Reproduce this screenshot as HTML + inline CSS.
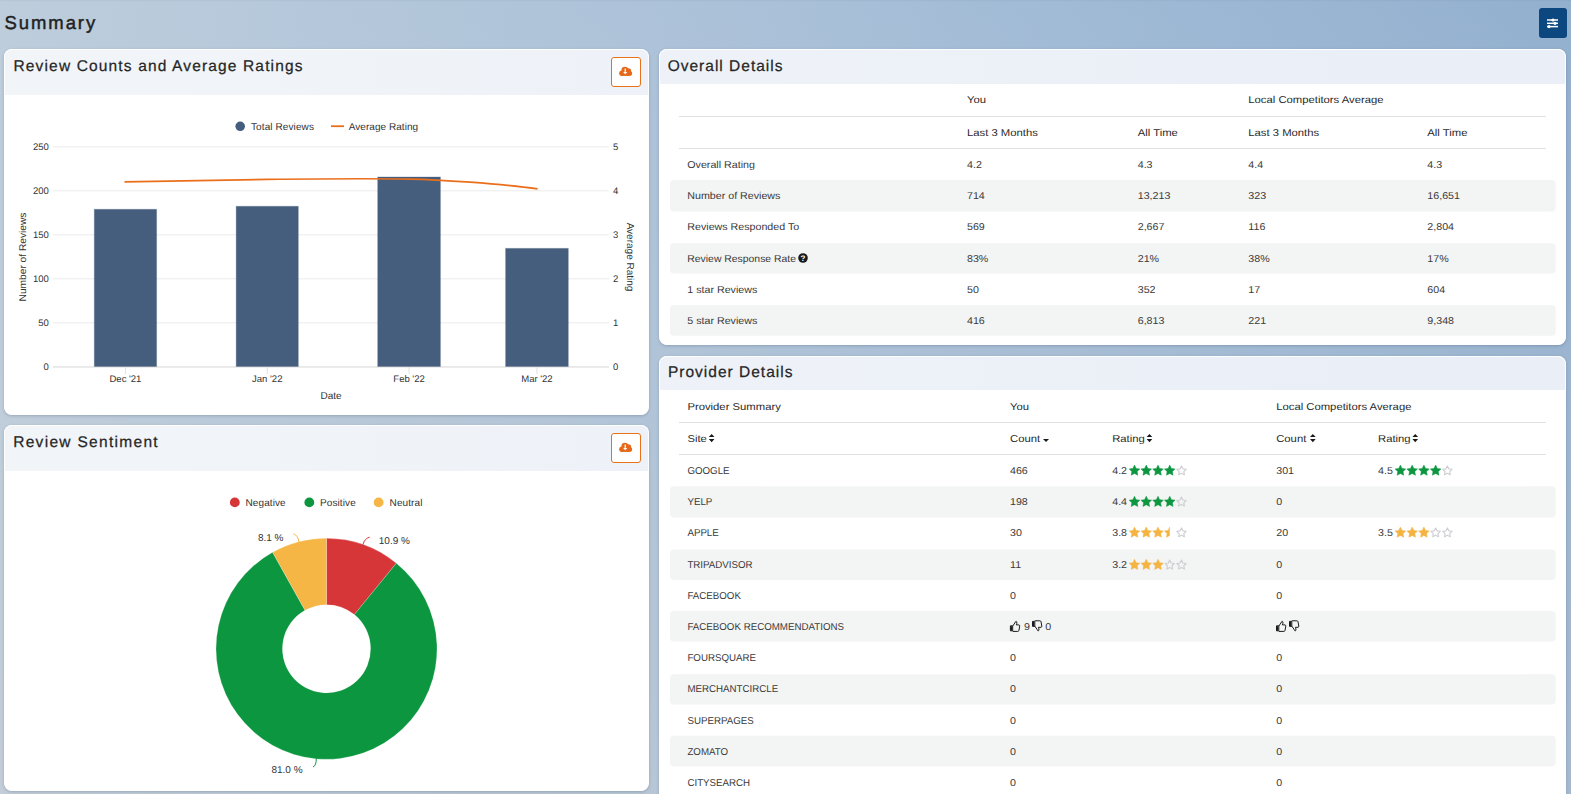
<!DOCTYPE html>
<html><head><meta charset="utf-8"><style>
*{margin:0;padding:0;box-sizing:border-box}
html,body{width:1571px;height:794px;overflow:hidden}
body{font-family:"Liberation Sans", sans-serif;position:relative;
background:linear-gradient(to bottom,rgba(204,205,207,0) 0%,rgba(204,205,207,.12) 40%,rgba(204,205,207,.35) 100%),linear-gradient(to right,#bdcddc 0%,#a9c0d8 50%,#9ab6d3 82%,#93b0cf 100%);}
.card{position:absolute;background:#fff;border-radius:8px;box-shadow:0 1px 3px rgba(40,60,90,.25);overflow:hidden}
.hdr{position:absolute;left:0;top:0;right:0;background:linear-gradient(90deg,#f1f4f8,#e9eef5)}
.card::after{content:'';position:absolute;left:0;top:0;right:0;bottom:0;border:1px solid rgba(255,255,255,.9);border-radius:8px}
svg{position:absolute;left:0;top:0}
.topsh{position:absolute;left:0;top:0;width:100%;height:2px;background:linear-gradient(to bottom,rgba(60,80,100,.07),rgba(60,80,100,0))}
</style></head>
<body>
<div class="topsh"></div>
<div class="card" style="left:4px;top:49px;width:645px;height:366px"><div class="hdr" style="height:46px;background:linear-gradient(90deg,#f2f5f8,#eef2f8)"></div></div>
<div class="card" style="left:4px;top:425px;width:645px;height:366px"><div class="hdr" style="height:46px;background:linear-gradient(90deg,#f2f5f8,#eef2f8)"></div></div>
<div class="card" style="left:659px;top:49px;width:907px;height:296px"><div class="hdr" style="height:35px;background:linear-gradient(90deg,#eef2f8,#e9eef7)"></div></div>
<div class="card" style="left:659px;top:356px;width:907px;height:474px"><div class="hdr" style="height:34px;background:linear-gradient(90deg,#eef2f8,#e9eef7)"></div></div>

<svg width="1571" height="794" viewBox="0 0 1571 794" text-rendering="geometricPrecision" font-family='"Liberation Sans", sans-serif'>
<text x="4.6" y="28.7" font-size="18.5" fill="#222" letter-spacing="1.9" font-weight="normal" text-anchor="start" stroke="#222" stroke-width="0.45">Summary</text>
<rect x="1539" y="8" width="28" height="30" rx="3" fill="#0d477f"/>
<rect x="1547" y="19.25" width="11" height="1.5" fill="#fff"/>
<circle cx="1553" cy="20" r="1.6" fill="#fff"/>
<rect x="1547" y="22.55" width="11" height="1.5" fill="#fff"/>
<circle cx="1555" cy="23.3" r="1.6" fill="#fff"/>
<rect x="1547" y="25.85" width="11" height="1.5" fill="#fff"/>
<circle cx="1549" cy="26.6" r="1.6" fill="#fff"/>
<text x="13.5" y="70.8" font-size="15.5" fill="#262626" letter-spacing="1.15" font-weight="normal" text-anchor="start" stroke="#262626" stroke-width="0.25">Review Counts and Average Ratings</text>
<text x="13.2" y="446.8" font-size="15.5" fill="#262626" letter-spacing="1.3" font-weight="normal" text-anchor="start" stroke="#262626" stroke-width="0.25">Review Sentiment</text>
<text x="667.7" y="71.1" font-size="15.5" fill="#262626" letter-spacing="1.0" font-weight="normal" text-anchor="start" stroke="#262626" stroke-width="0.25">Overall Details</text>
<text x="668" y="377.2" font-size="15.5" fill="#262626" letter-spacing="1.0" font-weight="normal" text-anchor="start" stroke="#262626" stroke-width="0.25">Provider Details</text>
<rect x="611.5" y="57.5" width="29" height="29" rx="2.5" fill="#fff" stroke="#e8711c" stroke-width="1"/><g transform="translate(0,0)" fill="#e4691a"><circle cx="621.9" cy="73.2" r="2.7"/><circle cx="624.9" cy="70.2" r="3.4"/><circle cx="628.5" cy="70.9" r="2.6"/><circle cx="629.5" cy="73.3" r="2.6"/><rect x="621.9" y="72.5" width="7.6" height="3.4"/><path d="M623.1 72.1 H627.3 L625.2 74.3Z M624.6 68.6 h1.2 v3.6 h-1.2z" fill="#fff"/></g>
<rect x="611.5" y="433.5" width="29" height="29" rx="2.5" fill="#fff" stroke="#e8711c" stroke-width="1"/><g transform="translate(0,376)" fill="#e4691a"><circle cx="621.9" cy="73.2" r="2.7"/><circle cx="624.9" cy="70.2" r="3.4"/><circle cx="628.5" cy="70.9" r="2.6"/><circle cx="629.5" cy="73.3" r="2.6"/><rect x="621.9" y="72.5" width="7.6" height="3.4"/><path d="M623.1 72.1 H627.3 L625.2 74.3Z M624.6 68.6 h1.2 v3.6 h-1.2z" fill="#fff"/></g>
<line x1="53" y1="366.8" x2="609" y2="366.8" stroke="#ebebeb" stroke-width="1"/>
<text x="48.8" y="370.2" font-size="9.5" fill="#333" letter-spacing="0" font-weight="normal" text-anchor="end" >0</text>
<text x="613" y="370.2" font-size="9.5" fill="#333" letter-spacing="0" font-weight="normal" text-anchor="start" >0</text>
<line x1="53" y1="322.8" x2="609" y2="322.8" stroke="#ebebeb" stroke-width="1"/>
<text x="48.8" y="326.2" font-size="9.5" fill="#333" letter-spacing="0" font-weight="normal" text-anchor="end" >50</text>
<text x="613" y="326.2" font-size="9.5" fill="#333" letter-spacing="0" font-weight="normal" text-anchor="start" >1</text>
<line x1="53" y1="278.8" x2="609" y2="278.8" stroke="#ebebeb" stroke-width="1"/>
<text x="48.8" y="282.2" font-size="9.5" fill="#333" letter-spacing="0" font-weight="normal" text-anchor="end" >100</text>
<text x="613" y="282.2" font-size="9.5" fill="#333" letter-spacing="0" font-weight="normal" text-anchor="start" >2</text>
<line x1="53" y1="234.8" x2="609" y2="234.8" stroke="#ebebeb" stroke-width="1"/>
<text x="48.8" y="238.20000000000002" font-size="9.5" fill="#333" letter-spacing="0" font-weight="normal" text-anchor="end" >150</text>
<text x="613" y="238.20000000000002" font-size="9.5" fill="#333" letter-spacing="0" font-weight="normal" text-anchor="start" >3</text>
<line x1="53" y1="190.8" x2="609" y2="190.8" stroke="#ebebeb" stroke-width="1"/>
<text x="48.8" y="194.20000000000002" font-size="9.5" fill="#333" letter-spacing="0" font-weight="normal" text-anchor="end" >200</text>
<text x="613" y="194.20000000000002" font-size="9.5" fill="#333" letter-spacing="0" font-weight="normal" text-anchor="start" >4</text>
<line x1="53" y1="146.8" x2="609" y2="146.8" stroke="#ebebeb" stroke-width="1"/>
<text x="48.8" y="150.20000000000002" font-size="9.5" fill="#333" letter-spacing="0" font-weight="normal" text-anchor="end" >250</text>
<text x="613" y="150.20000000000002" font-size="9.5" fill="#333" letter-spacing="0" font-weight="normal" text-anchor="start" >5</text>
<line x1="53" y1="367" x2="609" y2="367" stroke="#e0e0e0" stroke-width="1"/>
<rect x="94.3" y="209.3" width="62.3" height="157.2" fill="#465e7d" stroke="rgba(70,94,125,0.3)" stroke-width="1"/>
<line x1="125.44999999999999" y1="367" x2="125.44999999999999" y2="374" stroke="#e0e0e0" stroke-width="1"/>
<text x="125.44999999999999" y="382" font-size="9.5" fill="#333" letter-spacing="0" font-weight="normal" text-anchor="middle" >Dec '21</text>
<rect x="236.2" y="206.3" width="62.10000000000002" height="160.2" fill="#465e7d" stroke="rgba(70,94,125,0.3)" stroke-width="1"/>
<line x1="267.25" y1="367" x2="267.25" y2="374" stroke="#e0e0e0" stroke-width="1"/>
<text x="267.25" y="382" font-size="9.5" fill="#333" letter-spacing="0" font-weight="normal" text-anchor="middle" >Jan '22</text>
<rect x="377.7" y="177.0" width="62.69999999999999" height="189.5" fill="#465e7d" stroke="rgba(70,94,125,0.3)" stroke-width="1"/>
<line x1="409.04999999999995" y1="367" x2="409.04999999999995" y2="374" stroke="#e0e0e0" stroke-width="1"/>
<text x="409.04999999999995" y="382" font-size="9.5" fill="#333" letter-spacing="0" font-weight="normal" text-anchor="middle" >Feb '22</text>
<rect x="505.6" y="248.4" width="62.69999999999993" height="118.1" fill="#465e7d" stroke="rgba(70,94,125,0.3)" stroke-width="1"/>
<line x1="536.95" y1="367" x2="536.95" y2="374" stroke="#e0e0e0" stroke-width="1"/>
<text x="536.95" y="382" font-size="9.5" fill="#333" letter-spacing="0" font-weight="normal" text-anchor="middle" >Mar '22</text>
<text x="331" y="398.5" font-size="10" fill="#333" letter-spacing="0" font-weight="normal" text-anchor="middle" >Date</text>
<text transform="translate(25.5,257) rotate(-90) scale(1.04,1)" font-size="9.8" fill="#333" text-anchor="middle">Number of Reviews</text>
<text transform="translate(627.2,257) rotate(90)" font-size="10" fill="#333" text-anchor="middle">Average Rating</text>
<path d="M124.5 181.9 C 190 180.5, 250 179.6, 267 179.4 S 380 178.6, 409 179.1 S 500 183.5, 537.6 188.9" fill="none" stroke="#ea6f1c" stroke-width="1.6"/>
<circle cx="240.2" cy="126.3" r="4.8" fill="#465e7d"/>
<text x="251" y="129.8" font-size="10" fill="#333" letter-spacing="0.1" font-weight="normal" text-anchor="start" >Total Reviews</text>
<rect x="331" y="125.3" width="13" height="1.8" fill="#ea6f1c"/>
<text x="348.7" y="129.8" font-size="10" fill="#333" letter-spacing="0.05" font-weight="normal" text-anchor="start" >Average Rating</text>
<path d="M326.50 538.30 A110.5 110.5 0 0 1 396.34 563.17 L354.37 614.62 A44.1 44.1 0 0 0 326.50 604.70Z" fill="#d63638" stroke="#fff" stroke-width="0.2"/>
<path d="M396.34 563.17 A110.5 110.5 0 1 1 272.59 552.34 L304.99 610.30 A44.1 44.1 0 1 0 354.37 614.62Z" fill="#0c963f" stroke="#fff" stroke-width="0.2"/>
<path d="M272.59 552.34 A110.5 110.5 0 0 1 326.50 538.30 L326.50 604.70 A44.1 44.1 0 0 0 304.99 610.30Z" fill="#f5b646" stroke="#fff" stroke-width="0.2"/>
<path d="M363 544.6 Q364.5 538.5 369.7 537.1" fill="none" stroke="#d63638" stroke-width="1"/>
<path d="M299 542 Q298 535.5 293.5 533.8" fill="none" stroke="#f4b445" stroke-width="1"/>
<path d="M316.2 758.4 Q316.5 765.5 313 767" fill="none" stroke="#0c963f" stroke-width="1"/>
<text x="378.8" y="543.9" font-size="10" fill="#333" letter-spacing="0" font-weight="normal" text-anchor="start" >10.9 %</text>
<text x="257.9" y="541.1" font-size="10" fill="#333" letter-spacing="0" font-weight="normal" text-anchor="start" >8.1 %</text>
<text x="271.4" y="773" font-size="10" fill="#333" letter-spacing="0" font-weight="normal" text-anchor="start" >81.0 %</text>
<circle cx="234.8" cy="502.4" r="4.9" fill="#d63638"/>
<text x="245.5" y="506" font-size="10" fill="#333" letter-spacing="0.1" font-weight="normal" text-anchor="start" >Negative</text>
<circle cx="309.3" cy="502.4" r="4.9" fill="#0c963f"/>
<text x="320" y="506" font-size="10" fill="#333" letter-spacing="0.1" font-weight="normal" text-anchor="start" >Positive</text>
<circle cx="378.6" cy="502.4" r="4.9" fill="#f5b646"/>
<text x="389.6" y="506" font-size="10" fill="#333" letter-spacing="0.1" font-weight="normal" text-anchor="start" >Neutral</text>
<rect x="670" y="180" width="885.7" height="31.400000000000006" rx="4" fill="#f3f4f4"/>
<rect x="670" y="243.2" width="885.7" height="30.400000000000034" rx="4" fill="#f3f4f4"/>
<rect x="670" y="305.1" width="885.7" height="30.69999999999999" rx="4" fill="#f3f4f4"/>
<rect x="679" y="116" width="867" height="1" fill="#dfe1e3"/>
<rect x="679" y="148" width="867" height="1" fill="#dfe1e3"/>
<text transform="translate(967,102.8) scale(1.128,1)" font-size="10" fill="#2a2a2a" letter-spacing="0" font-weight="normal" text-anchor="start" >You</text>
<text transform="translate(1248.3,102.8) scale(1.128,1)" font-size="10" fill="#2a2a2a" letter-spacing="0" font-weight="normal" text-anchor="start" >Local Competitors Average</text>
<text transform="translate(967,135.6) scale(1.128,1)" font-size="10" fill="#2a2a2a" letter-spacing="0" font-weight="normal" text-anchor="start" >Last 3 Months</text>
<text transform="translate(1137.7,135.6) scale(1.128,1)" font-size="10" fill="#2a2a2a" letter-spacing="0" font-weight="normal" text-anchor="start" >All Time</text>
<text transform="translate(1248.3,135.6) scale(1.128,1)" font-size="10" fill="#2a2a2a" letter-spacing="0" font-weight="normal" text-anchor="start" >Last 3 Months</text>
<text transform="translate(1427.3,135.6) scale(1.128,1)" font-size="10" fill="#2a2a2a" letter-spacing="0" font-weight="normal" text-anchor="start" >All Time</text>
<text transform="translate(687.3,167.8) scale(1.067,1)" font-size="10" fill="#3a3a3a" letter-spacing="0" font-weight="normal" text-anchor="start" >Overall Rating</text>
<text transform="translate(967,167.8) scale(1.067,1)" font-size="10" fill="#3a3a3a" letter-spacing="0" font-weight="normal" text-anchor="start" >4.2</text>
<text transform="translate(1137.7,167.8) scale(1.067,1)" font-size="10" fill="#3a3a3a" letter-spacing="0" font-weight="normal" text-anchor="start" >4.3</text>
<text transform="translate(1248.3,167.8) scale(1.067,1)" font-size="10" fill="#3a3a3a" letter-spacing="0" font-weight="normal" text-anchor="start" >4.4</text>
<text transform="translate(1427.3,167.8) scale(1.067,1)" font-size="10" fill="#3a3a3a" letter-spacing="0" font-weight="normal" text-anchor="start" >4.3</text>
<text transform="translate(687.3,198.8) scale(1.067,1)" font-size="10" fill="#3a3a3a" letter-spacing="0" font-weight="normal" text-anchor="start" >Number of Reviews</text>
<text transform="translate(967,198.8) scale(1.067,1)" font-size="10" fill="#3a3a3a" letter-spacing="0" font-weight="normal" text-anchor="start" >714</text>
<text transform="translate(1137.7,198.8) scale(1.067,1)" font-size="10" fill="#3a3a3a" letter-spacing="0" font-weight="normal" text-anchor="start" >13,213</text>
<text transform="translate(1248.3,198.8) scale(1.067,1)" font-size="10" fill="#3a3a3a" letter-spacing="0" font-weight="normal" text-anchor="start" >323</text>
<text transform="translate(1427.3,198.8) scale(1.067,1)" font-size="10" fill="#3a3a3a" letter-spacing="0" font-weight="normal" text-anchor="start" >16,651</text>
<text transform="translate(687.3,229.9) scale(1.067,1)" font-size="10" fill="#3a3a3a" letter-spacing="0" font-weight="normal" text-anchor="start" >Reviews Responded To</text>
<text transform="translate(967,229.9) scale(1.067,1)" font-size="10" fill="#3a3a3a" letter-spacing="0" font-weight="normal" text-anchor="start" >569</text>
<text transform="translate(1137.7,229.9) scale(1.067,1)" font-size="10" fill="#3a3a3a" letter-spacing="0" font-weight="normal" text-anchor="start" >2,667</text>
<text transform="translate(1248.3,229.9) scale(1.067,1)" font-size="10" fill="#3a3a3a" letter-spacing="0" font-weight="normal" text-anchor="start" >116</text>
<text transform="translate(1427.3,229.9) scale(1.067,1)" font-size="10" fill="#3a3a3a" letter-spacing="0" font-weight="normal" text-anchor="start" >2,804</text>
<text transform="translate(687.3,261.7) scale(1.04,1)" font-size="10" fill="#3a3a3a" letter-spacing="0" font-weight="normal" text-anchor="start" >Review Response Rate</text>
<text transform="translate(967,261.7) scale(1.067,1)" font-size="10" fill="#3a3a3a" letter-spacing="0" font-weight="normal" text-anchor="start" >83%</text>
<text transform="translate(1137.7,261.7) scale(1.067,1)" font-size="10" fill="#3a3a3a" letter-spacing="0" font-weight="normal" text-anchor="start" >21%</text>
<text transform="translate(1248.3,261.7) scale(1.067,1)" font-size="10" fill="#3a3a3a" letter-spacing="0" font-weight="normal" text-anchor="start" >38%</text>
<text transform="translate(1427.3,261.7) scale(1.067,1)" font-size="10" fill="#3a3a3a" letter-spacing="0" font-weight="normal" text-anchor="start" >17%</text>
<text transform="translate(687.3,292.9) scale(1.067,1)" font-size="10" fill="#3a3a3a" letter-spacing="0" font-weight="normal" text-anchor="start" >1 star Reviews</text>
<text transform="translate(967,292.9) scale(1.067,1)" font-size="10" fill="#3a3a3a" letter-spacing="0" font-weight="normal" text-anchor="start" >50</text>
<text transform="translate(1137.7,292.9) scale(1.067,1)" font-size="10" fill="#3a3a3a" letter-spacing="0" font-weight="normal" text-anchor="start" >352</text>
<text transform="translate(1248.3,292.9) scale(1.067,1)" font-size="10" fill="#3a3a3a" letter-spacing="0" font-weight="normal" text-anchor="start" >17</text>
<text transform="translate(1427.3,292.9) scale(1.067,1)" font-size="10" fill="#3a3a3a" letter-spacing="0" font-weight="normal" text-anchor="start" >604</text>
<text transform="translate(687.3,324.0) scale(1.067,1)" font-size="10" fill="#3a3a3a" letter-spacing="0" font-weight="normal" text-anchor="start" >5 star Reviews</text>
<text transform="translate(967,324.0) scale(1.067,1)" font-size="10" fill="#3a3a3a" letter-spacing="0" font-weight="normal" text-anchor="start" >416</text>
<text transform="translate(1137.7,324.0) scale(1.067,1)" font-size="10" fill="#3a3a3a" letter-spacing="0" font-weight="normal" text-anchor="start" >6,813</text>
<text transform="translate(1248.3,324.0) scale(1.067,1)" font-size="10" fill="#3a3a3a" letter-spacing="0" font-weight="normal" text-anchor="start" >221</text>
<text transform="translate(1427.3,324.0) scale(1.067,1)" font-size="10" fill="#3a3a3a" letter-spacing="0" font-weight="normal" text-anchor="start" >9,348</text>
<circle cx="803" cy="258" r="4.8" fill="#1a1a1a"/>
<text x="803" y="261.3" font-size="8" font-weight="bold" fill="#fff" text-anchor="middle">?</text>
<rect x="670" y="486.2" width="885.7" height="31.30000000000001" rx="4" fill="#f3f4f4"/>
<rect x="670" y="549.6" width="885.7" height="30.399999999999977" rx="4" fill="#f3f4f4"/>
<rect x="670" y="610.9" width="885.7" height="30.700000000000045" rx="4" fill="#f3f4f4"/>
<rect x="670" y="674.2" width="885.7" height="30.299999999999955" rx="4" fill="#f3f4f4"/>
<rect x="670" y="735.8" width="885.7" height="30.40000000000009" rx="4" fill="#f3f4f4"/>
<rect x="679" y="422" width="867" height="1" fill="#dfe1e3"/>
<rect x="679" y="454" width="867" height="1" fill="#dfe1e3"/>
<text transform="translate(687.4,409.6) scale(1.128,1)" font-size="10" fill="#2a2a2a" letter-spacing="0" font-weight="normal" text-anchor="start" >Provider Summary</text>
<text transform="translate(1010,409.6) scale(1.128,1)" font-size="10" fill="#2a2a2a" letter-spacing="0" font-weight="normal" text-anchor="start" >You</text>
<text transform="translate(1276.2,409.6) scale(1.128,1)" font-size="10" fill="#2a2a2a" letter-spacing="0" font-weight="normal" text-anchor="start" >Local Competitors Average</text>
<text transform="translate(687.4,442.3) scale(1.128,1)" font-size="10" fill="#2a2a2a" letter-spacing="0" font-weight="normal" text-anchor="start" >Site</text>
<path d="M708.8 437.09999999999997 L711.65 434.0 L714.5 437.09999999999997Z M708.8 439.0 L711.65 442.3 L714.5 439.0Z" fill="#1a1a1a"/>
<text transform="translate(1010,442.3) scale(1.128,1)" font-size="10" fill="#2a2a2a" letter-spacing="0" font-weight="normal" text-anchor="start" >Count</text>
<path d="M1043 439 h6 l-3 3z" fill="#1a1a1a"/>
<text transform="translate(1112.2,442.3) scale(1.128,1)" font-size="10" fill="#2a2a2a" letter-spacing="0" font-weight="normal" text-anchor="start" >Rating</text>
<path d="M1146.6 437.09999999999997 L1149.4499999999998 434.0 L1152.3 437.09999999999997Z M1146.6 439.0 L1149.4499999999998 442.3 L1152.3 439.0Z" fill="#1a1a1a"/>
<text transform="translate(1276.2,442.3) scale(1.128,1)" font-size="10" fill="#2a2a2a" letter-spacing="0" font-weight="normal" text-anchor="start" >Count</text>
<path d="M1310 437.09999999999997 L1312.85 434.0 L1315.7 437.09999999999997Z M1310 439.0 L1312.85 442.3 L1315.7 439.0Z" fill="#1a1a1a"/>
<text transform="translate(1378,442.3) scale(1.128,1)" font-size="10" fill="#2a2a2a" letter-spacing="0" font-weight="normal" text-anchor="start" >Rating</text>
<path d="M1412.4 437.09999999999997 L1415.25 434.0 L1418.1000000000001 437.09999999999997Z M1412.4 439.0 L1415.25 442.3 L1418.1000000000001 439.0Z" fill="#1a1a1a"/>
<text transform="translate(687.4,474) scale(0.973,1)" font-size="10" fill="#3a3a3a" letter-spacing="0" font-weight="normal" text-anchor="start" >GOOGLE</text>
<text transform="translate(1010,474) scale(1.067,1)" font-size="10" fill="#3a3a3a" letter-spacing="0" font-weight="normal" text-anchor="start" >466</text>
<text transform="translate(1112.2,474) scale(1.067,1)" font-size="10" fill="#3a3a3a" letter-spacing="0" font-weight="normal" text-anchor="start" >4.2</text>
<polygon points="1134.50,465.10 1136.15,468.43 1139.83,468.97 1137.16,471.57 1137.79,475.23 1134.50,473.50 1131.21,475.23 1131.84,471.57 1129.17,468.97 1132.85,468.43" fill="#0c963f" stroke="#0c963f" stroke-width="0.5" stroke-linejoin="round"/><polygon points="1146.25,465.10 1147.90,468.43 1151.58,468.97 1148.91,471.57 1149.54,475.23 1146.25,473.50 1142.96,475.23 1143.59,471.57 1140.92,468.97 1144.60,468.43" fill="#0c963f" stroke="#0c963f" stroke-width="0.5" stroke-linejoin="round"/><polygon points="1158.00,465.10 1159.65,468.43 1163.33,468.97 1160.66,471.57 1161.29,475.23 1158.00,473.50 1154.71,475.23 1155.34,471.57 1152.67,468.97 1156.35,468.43" fill="#0c963f" stroke="#0c963f" stroke-width="0.5" stroke-linejoin="round"/><polygon points="1169.75,465.10 1171.40,468.43 1175.08,468.97 1172.41,471.57 1173.04,475.23 1169.75,473.50 1166.46,475.23 1167.09,471.57 1164.42,468.97 1168.10,468.43" fill="#0c963f" stroke="#0c963f" stroke-width="0.5" stroke-linejoin="round"/><polygon points="1181.50,465.90 1182.94,468.82 1186.16,469.29 1183.83,471.56 1184.38,474.76 1181.50,473.25 1178.62,474.76 1179.17,471.56 1176.84,469.29 1180.06,468.82" fill="none" stroke="#cfcfd3" stroke-width="1.15" stroke-linejoin="round"/>
<text transform="translate(1276.2,474) scale(1.067,1)" font-size="10" fill="#3a3a3a" letter-spacing="0" font-weight="normal" text-anchor="start" >301</text>
<text transform="translate(1378,474) scale(1.067,1)" font-size="10" fill="#3a3a3a" letter-spacing="0" font-weight="normal" text-anchor="start" >4.5</text>
<polygon points="1400.40,465.10 1402.05,468.43 1405.73,468.97 1403.06,471.57 1403.69,475.23 1400.40,473.50 1397.11,475.23 1397.74,471.57 1395.07,468.97 1398.75,468.43" fill="#0c963f" stroke="#0c963f" stroke-width="0.5" stroke-linejoin="round"/><polygon points="1412.15,465.10 1413.80,468.43 1417.48,468.97 1414.81,471.57 1415.44,475.23 1412.15,473.50 1408.86,475.23 1409.49,471.57 1406.82,468.97 1410.50,468.43" fill="#0c963f" stroke="#0c963f" stroke-width="0.5" stroke-linejoin="round"/><polygon points="1423.90,465.10 1425.55,468.43 1429.23,468.97 1426.56,471.57 1427.19,475.23 1423.90,473.50 1420.61,475.23 1421.24,471.57 1418.57,468.97 1422.25,468.43" fill="#0c963f" stroke="#0c963f" stroke-width="0.5" stroke-linejoin="round"/><polygon points="1435.65,465.10 1437.30,468.43 1440.98,468.97 1438.31,471.57 1438.94,475.23 1435.65,473.50 1432.36,475.23 1432.99,471.57 1430.32,468.97 1434.00,468.43" fill="#0c963f" stroke="#0c963f" stroke-width="0.5" stroke-linejoin="round"/><polygon points="1447.40,465.90 1448.84,468.82 1452.06,469.29 1449.73,471.56 1450.28,474.76 1447.40,473.25 1444.52,474.76 1445.07,471.56 1442.74,469.29 1445.96,468.82" fill="none" stroke="#cfcfd3" stroke-width="1.15" stroke-linejoin="round"/>
<text transform="translate(687.4,505.2) scale(0.973,1)" font-size="10" fill="#3a3a3a" letter-spacing="0" font-weight="normal" text-anchor="start" >YELP</text>
<text transform="translate(1010,505.2) scale(1.067,1)" font-size="10" fill="#3a3a3a" letter-spacing="0" font-weight="normal" text-anchor="start" >198</text>
<text transform="translate(1112.2,505.2) scale(1.067,1)" font-size="10" fill="#3a3a3a" letter-spacing="0" font-weight="normal" text-anchor="start" >4.4</text>
<polygon points="1134.50,496.30 1136.15,499.63 1139.83,500.17 1137.16,502.77 1137.79,506.43 1134.50,504.70 1131.21,506.43 1131.84,502.77 1129.17,500.17 1132.85,499.63" fill="#0c963f" stroke="#0c963f" stroke-width="0.5" stroke-linejoin="round"/><polygon points="1146.25,496.30 1147.90,499.63 1151.58,500.17 1148.91,502.77 1149.54,506.43 1146.25,504.70 1142.96,506.43 1143.59,502.77 1140.92,500.17 1144.60,499.63" fill="#0c963f" stroke="#0c963f" stroke-width="0.5" stroke-linejoin="round"/><polygon points="1158.00,496.30 1159.65,499.63 1163.33,500.17 1160.66,502.77 1161.29,506.43 1158.00,504.70 1154.71,506.43 1155.34,502.77 1152.67,500.17 1156.35,499.63" fill="#0c963f" stroke="#0c963f" stroke-width="0.5" stroke-linejoin="round"/><polygon points="1169.75,496.30 1171.40,499.63 1175.08,500.17 1172.41,502.77 1173.04,506.43 1169.75,504.70 1166.46,506.43 1167.09,502.77 1164.42,500.17 1168.10,499.63" fill="#0c963f" stroke="#0c963f" stroke-width="0.5" stroke-linejoin="round"/><polygon points="1181.50,497.10 1182.94,500.02 1186.16,500.49 1183.83,502.76 1184.38,505.96 1181.50,504.45 1178.62,505.96 1179.17,502.76 1176.84,500.49 1180.06,500.02" fill="none" stroke="#cfcfd3" stroke-width="1.15" stroke-linejoin="round"/>
<text transform="translate(1276.2,505.2) scale(1.067,1)" font-size="10" fill="#3a3a3a" letter-spacing="0" font-weight="normal" text-anchor="start" >0</text>
<text transform="translate(687.4,536) scale(0.973,1)" font-size="10" fill="#3a3a3a" letter-spacing="0" font-weight="normal" text-anchor="start" >APPLE</text>
<text transform="translate(1010,536) scale(1.067,1)" font-size="10" fill="#3a3a3a" letter-spacing="0" font-weight="normal" text-anchor="start" >30</text>
<text transform="translate(1112.2,536) scale(1.067,1)" font-size="10" fill="#3a3a3a" letter-spacing="0" font-weight="normal" text-anchor="start" >3.8</text>
<polygon points="1134.50,527.10 1136.15,530.43 1139.83,530.97 1137.16,533.57 1137.79,537.23 1134.50,535.50 1131.21,537.23 1131.84,533.57 1129.17,530.97 1132.85,530.43" fill="#f5b342" stroke="#f5b342" stroke-width="0.5" stroke-linejoin="round"/><polygon points="1146.25,527.10 1147.90,530.43 1151.58,530.97 1148.91,533.57 1149.54,537.23 1146.25,535.50 1142.96,537.23 1143.59,533.57 1140.92,530.97 1144.60,530.43" fill="#f5b342" stroke="#f5b342" stroke-width="0.5" stroke-linejoin="round"/><polygon points="1158.00,527.10 1159.65,530.43 1163.33,530.97 1160.66,533.57 1161.29,537.23 1158.00,535.50 1154.71,537.23 1155.34,533.57 1152.67,530.97 1156.35,530.43" fill="#f5b342" stroke="#f5b342" stroke-width="0.5" stroke-linejoin="round"/><clipPath id="hc532"><rect x="1163.75" y="525.3" width="6" height="14"/></clipPath><g clip-path="url(#hc532)"><polygon points="1169.75,527.10 1171.40,530.43 1175.08,530.97 1172.41,533.57 1173.04,537.23 1169.75,535.50 1166.46,537.23 1167.09,533.57 1164.42,530.97 1168.10,530.43" fill="#f5b342" stroke="#f5b342" stroke-width="0.5" stroke-linejoin="round"/></g><polygon points="1181.50,527.90 1182.94,530.82 1186.16,531.29 1183.83,533.56 1184.38,536.76 1181.50,535.25 1178.62,536.76 1179.17,533.56 1176.84,531.29 1180.06,530.82" fill="none" stroke="#cfcfd3" stroke-width="1.15" stroke-linejoin="round"/>
<text transform="translate(1276.2,536) scale(1.067,1)" font-size="10" fill="#3a3a3a" letter-spacing="0" font-weight="normal" text-anchor="start" >20</text>
<text transform="translate(1378,536) scale(1.067,1)" font-size="10" fill="#3a3a3a" letter-spacing="0" font-weight="normal" text-anchor="start" >3.5</text>
<polygon points="1400.40,527.10 1402.05,530.43 1405.73,530.97 1403.06,533.57 1403.69,537.23 1400.40,535.50 1397.11,537.23 1397.74,533.57 1395.07,530.97 1398.75,530.43" fill="#f5b342" stroke="#f5b342" stroke-width="0.5" stroke-linejoin="round"/><polygon points="1412.15,527.10 1413.80,530.43 1417.48,530.97 1414.81,533.57 1415.44,537.23 1412.15,535.50 1408.86,537.23 1409.49,533.57 1406.82,530.97 1410.50,530.43" fill="#f5b342" stroke="#f5b342" stroke-width="0.5" stroke-linejoin="round"/><polygon points="1423.90,527.10 1425.55,530.43 1429.23,530.97 1426.56,533.57 1427.19,537.23 1423.90,535.50 1420.61,537.23 1421.24,533.57 1418.57,530.97 1422.25,530.43" fill="#f5b342" stroke="#f5b342" stroke-width="0.5" stroke-linejoin="round"/><polygon points="1435.65,527.90 1437.09,530.82 1440.31,531.29 1437.98,533.56 1438.53,536.76 1435.65,535.25 1432.77,536.76 1433.32,533.56 1430.99,531.29 1434.21,530.82" fill="none" stroke="#cfcfd3" stroke-width="1.15" stroke-linejoin="round"/><polygon points="1447.40,527.90 1448.84,530.82 1452.06,531.29 1449.73,533.56 1450.28,536.76 1447.40,535.25 1444.52,536.76 1445.07,533.56 1442.74,531.29 1445.96,530.82" fill="none" stroke="#cfcfd3" stroke-width="1.15" stroke-linejoin="round"/>
<text transform="translate(687.4,568.2) scale(0.973,1)" font-size="10" fill="#3a3a3a" letter-spacing="0" font-weight="normal" text-anchor="start" >TRIPADVISOR</text>
<text transform="translate(1010,568.2) scale(1.067,1)" font-size="10" fill="#3a3a3a" letter-spacing="0" font-weight="normal" text-anchor="start" >11</text>
<text transform="translate(1112.2,568.2) scale(1.067,1)" font-size="10" fill="#3a3a3a" letter-spacing="0" font-weight="normal" text-anchor="start" >3.2</text>
<polygon points="1134.50,559.30 1136.15,562.63 1139.83,563.17 1137.16,565.77 1137.79,569.43 1134.50,567.70 1131.21,569.43 1131.84,565.77 1129.17,563.17 1132.85,562.63" fill="#f5b342" stroke="#f5b342" stroke-width="0.5" stroke-linejoin="round"/><polygon points="1146.25,559.30 1147.90,562.63 1151.58,563.17 1148.91,565.77 1149.54,569.43 1146.25,567.70 1142.96,569.43 1143.59,565.77 1140.92,563.17 1144.60,562.63" fill="#f5b342" stroke="#f5b342" stroke-width="0.5" stroke-linejoin="round"/><polygon points="1158.00,559.30 1159.65,562.63 1163.33,563.17 1160.66,565.77 1161.29,569.43 1158.00,567.70 1154.71,569.43 1155.34,565.77 1152.67,563.17 1156.35,562.63" fill="#f5b342" stroke="#f5b342" stroke-width="0.5" stroke-linejoin="round"/><polygon points="1169.75,560.10 1171.19,563.02 1174.41,563.49 1172.08,565.76 1172.63,568.96 1169.75,567.45 1166.87,568.96 1167.42,565.76 1165.09,563.49 1168.31,563.02" fill="none" stroke="#cfcfd3" stroke-width="1.15" stroke-linejoin="round"/><polygon points="1181.50,560.10 1182.94,563.02 1186.16,563.49 1183.83,565.76 1184.38,568.96 1181.50,567.45 1178.62,568.96 1179.17,565.76 1176.84,563.49 1180.06,563.02" fill="none" stroke="#cfcfd3" stroke-width="1.15" stroke-linejoin="round"/>
<text transform="translate(1276.2,568.2) scale(1.067,1)" font-size="10" fill="#3a3a3a" letter-spacing="0" font-weight="normal" text-anchor="start" >0</text>
<text transform="translate(687.4,598.8) scale(0.973,1)" font-size="10" fill="#3a3a3a" letter-spacing="0" font-weight="normal" text-anchor="start" >FACEBOOK</text>
<text transform="translate(1010,598.8) scale(1.067,1)" font-size="10" fill="#3a3a3a" letter-spacing="0" font-weight="normal" text-anchor="start" >0</text>
<text transform="translate(1276.2,598.8) scale(1.067,1)" font-size="10" fill="#3a3a3a" letter-spacing="0" font-weight="normal" text-anchor="start" >0</text>
<text transform="translate(687.4,629.8) scale(0.973,1)" font-size="10" fill="#3a3a3a" letter-spacing="0" font-weight="normal" text-anchor="start" >FACEBOOK RECOMMENDATIONS</text>
<path d="M1010.4 625.8 h2.3 v5 h-2.3z M1012.6999999999999 626.0999999999999 l2.2-3.2 q0.6-1.6 1.2-1.6 q1.1 0.3 0.7 2 l-0.5 1.6 h2.6 q1 0.2 0.8 1.2 l-0.8 4.4 q-0.2 0.9-1.1 0.9 h-5.1" fill="none" stroke="#1a1a1a" stroke-width="1"/><rect x="1010.4" y="626.1999999999999" width="1.8" height="4.4" fill="#1a1a1a"/>
<text transform="translate(1023.9,629.8) scale(1.067,1)" font-size="10" fill="#3a3a3a" letter-spacing="0" font-weight="normal" text-anchor="start" >9</text>
<g transform="translate(1032,631.4) scale(1,-1)"><path d="M0.5 5 h2.3 v5 h-2.3z M2.8 5.3 l2.2-3.2 q0.6-1.6 1.2-1.6 q1.1 0.3 0.7 2 l-0.5 1.6 h2.6 q1 0.2 0.8 1.2 l-0.8 4.4 q-0.2 0.9-1.1 0.9 h-5.1" fill="none" stroke="#1a1a1a" stroke-width="1"/><rect x="0.5" y="5.4" width="1.8" height="4.4" fill="#1a1a1a"/></g>
<text transform="translate(1045.3,629.8) scale(1.067,1)" font-size="10" fill="#3a3a3a" letter-spacing="0" font-weight="normal" text-anchor="start" >0</text>
<path d="M1276.5 625.8 h2.3 v5 h-2.3z M1278.8 626.0999999999999 l2.2-3.2 q0.6-1.6 1.2-1.6 q1.1 0.3 0.7 2 l-0.5 1.6 h2.6 q1 0.2 0.8 1.2 l-0.8 4.4 q-0.2 0.9-1.1 0.9 h-5.1" fill="none" stroke="#1a1a1a" stroke-width="1"/><rect x="1276.5" y="626.1999999999999" width="1.8" height="4.4" fill="#1a1a1a"/>
<g transform="translate(1289,631.4) scale(1,-1)"><path d="M0.5 5 h2.3 v5 h-2.3z M2.8 5.3 l2.2-3.2 q0.6-1.6 1.2-1.6 q1.1 0.3 0.7 2 l-0.5 1.6 h2.6 q1 0.2 0.8 1.2 l-0.8 4.4 q-0.2 0.9-1.1 0.9 h-5.1" fill="none" stroke="#1a1a1a" stroke-width="1"/><rect x="0.5" y="5.4" width="1.8" height="4.4" fill="#1a1a1a"/></g>
<text transform="translate(687.4,661.1) scale(0.973,1)" font-size="10" fill="#3a3a3a" letter-spacing="0" font-weight="normal" text-anchor="start" >FOURSQUARE</text>
<text transform="translate(1010,661.1) scale(1.067,1)" font-size="10" fill="#3a3a3a" letter-spacing="0" font-weight="normal" text-anchor="start" >0</text>
<text transform="translate(1276.2,661.1) scale(1.067,1)" font-size="10" fill="#3a3a3a" letter-spacing="0" font-weight="normal" text-anchor="start" >0</text>
<text transform="translate(687.4,692) scale(0.973,1)" font-size="10" fill="#3a3a3a" letter-spacing="0" font-weight="normal" text-anchor="start" >MERCHANTCIRCLE</text>
<text transform="translate(1010,692) scale(1.067,1)" font-size="10" fill="#3a3a3a" letter-spacing="0" font-weight="normal" text-anchor="start" >0</text>
<text transform="translate(1276.2,692) scale(1.067,1)" font-size="10" fill="#3a3a3a" letter-spacing="0" font-weight="normal" text-anchor="start" >0</text>
<text transform="translate(687.4,724) scale(0.973,1)" font-size="10" fill="#3a3a3a" letter-spacing="0" font-weight="normal" text-anchor="start" >SUPERPAGES</text>
<text transform="translate(1010,724) scale(1.067,1)" font-size="10" fill="#3a3a3a" letter-spacing="0" font-weight="normal" text-anchor="start" >0</text>
<text transform="translate(1276.2,724) scale(1.067,1)" font-size="10" fill="#3a3a3a" letter-spacing="0" font-weight="normal" text-anchor="start" >0</text>
<text transform="translate(687.4,755) scale(0.973,1)" font-size="10" fill="#3a3a3a" letter-spacing="0" font-weight="normal" text-anchor="start" >ZOMATO</text>
<text transform="translate(1010,755) scale(1.067,1)" font-size="10" fill="#3a3a3a" letter-spacing="0" font-weight="normal" text-anchor="start" >0</text>
<text transform="translate(1276.2,755) scale(1.067,1)" font-size="10" fill="#3a3a3a" letter-spacing="0" font-weight="normal" text-anchor="start" >0</text>
<text transform="translate(687.4,786) scale(0.973,1)" font-size="10" fill="#3a3a3a" letter-spacing="0" font-weight="normal" text-anchor="start" >CITYSEARCH</text>
<text transform="translate(1010,786) scale(1.067,1)" font-size="10" fill="#3a3a3a" letter-spacing="0" font-weight="normal" text-anchor="start" >0</text>
<text transform="translate(1276.2,786) scale(1.067,1)" font-size="10" fill="#3a3a3a" letter-spacing="0" font-weight="normal" text-anchor="start" >0</text>
</svg>
</body></html>
